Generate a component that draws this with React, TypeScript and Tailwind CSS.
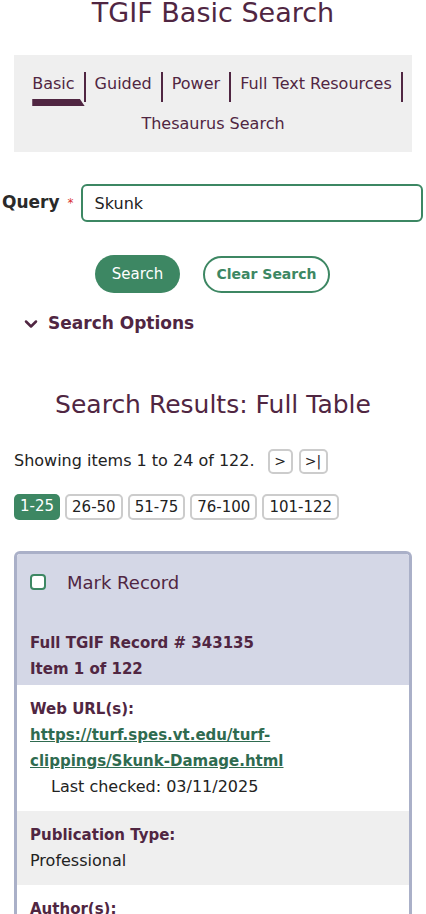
import { ChevronDown } from "lucide-react";

const navItems = ["Basic", "Guided", "Power", "Full Text Resources", "Thesaurus Search"];
const pages = ["1-25", "26-50", "51-75", "76-100", "101-122"];

export default function App() {
  return (
    <div className="min-h-screen bg-white font-['DejaVu_Sans',sans-serif] text-[#222]">
      <h1 className="mt-[-3px] text-center text-[27px] leading-[32px] text-[#502642]">
        TGIF Basic Search
      </h1>

      {/* search type tabs */}
      <nav className="mx-[14px] mt-[26px] flex h-[97px] flex-wrap content-start justify-center bg-[#efefef] px-1 pt-[17px]">
        {navItems.map((item, i) => (
          <div
            key={item}
            className={
              "relative h-[30px] px-[9px] text-[16px] leading-[24px] text-[#502642] " +
              (i < 3 ? "border-r-2 border-[#502642]" : "") +
              (i === 3 ? "border-r-2 border-[#502642] mb-[10px]" : "")
            }
          >
            {item}
            {i === 0 && (
              <span className="absolute bottom-[-4px] left-[9px] right-[-1px] h-[7px] bg-[#502642] [clip-path:polygon(0_0,91%_0,100%_100%,0_100%)]" />
            )}
          </div>
        ))}
      </nav>

      {/* query */}
      <div className="mt-[32px] flex items-center pl-[2px] pr-[3px]">
        <label className="text-[17px] font-bold text-[#2a2a2a]">Query</label>
        <span className="ml-[8px] mr-[7px] text-[12px] text-[#d93030]">*</span>
        <input
          defaultValue="Skunk"
          className="h-[38px] flex-1 rounded-[6px] border-2 border-[#3c8763] px-[12px] text-[16px] text-[#222] outline-none"
        />
      </div>

      <div className="mt-[33px] flex items-center pl-[95px]">
        <button className="h-[38px] w-[85px] rounded-full bg-[#3d8763] text-[15px] text-white">
          Search
        </button>
        <button className="ml-[23px] h-[37px] w-[127px] rounded-full border-2 border-[#3d8763] text-[14px] font-bold text-[#3d8763]">
          Clear Search
        </button>
      </div>

      <div className="mt-[18px] flex items-center gap-[7px] pl-[21px] text-[#502642]">
        <ChevronDown className="h-[20px] w-[20px]" strokeWidth={3} />
        <span className="text-[17px] font-bold">Search Options</span>
      </div>

      <h2 className="mt-[52px] text-center text-[25px] leading-[32px] text-[#502642]">
        Search Results: Full Table
      </h2>

      <div className="mt-[28px] flex items-center pl-[14px]">
        <span className="text-[16px] text-[#222]">Showing items 1 to 24 of 122.</span>
        <button className="ml-[13px] h-[25px] w-[25px] rounded-[5px] border-2 border-[#ccc] text-[14px] leading-none">
          &gt;
        </button>
        <button className="ml-[6px] h-[25px] w-[29px] rounded-[5px] border-2 border-[#ccc] text-[14px] leading-none">
          &gt;|
        </button>
      </div>

      <div className="mt-[20px] flex gap-[5px] pl-[14px]">
        {pages.map((p, i) => (
          <button
            key={p}
            className={
              i === 0
                ? "h-[26px] rounded-[5px] bg-[#3d8763] px-[6px] text-[15px] text-white"
                : "h-[26px] rounded-[5px] border-2 border-[#ccc] px-[5px] text-[15px] text-[#222]"
            }
          >
            {p}
          </button>
        ))}
      </div>

      {/* record card */}
      <div className="mx-[14px] mt-[31px] overflow-hidden rounded-t-[6px] border-x-[3px] border-t-[3px] border-[#aab0c8]">
        <div className="bg-[#d4d7e6] px-[13px] pb-[3px] pt-[15px]">
          <label className="flex items-center">
            <span className="h-[16px] w-[16px] rounded-[4px] border-2 border-[#3d8763] bg-white" />
            <span className="ml-[21px] text-[18px] text-[#502642]">Mark Record</span>
          </label>
          <div className="mt-[34px] text-[15px] font-bold leading-[26px] text-[#502642]">
            <div>Full TGIF Record # 343135</div>
            <div>Item 1 of 122</div>
          </div>
        </div>

        <div className="bg-white px-[13px] py-[11px] text-[16px] leading-[26px]">
          <div className="text-[15px] font-bold text-[#502642]">Web URL(s):</div>
          <a href="#" className="text-[15px] font-bold text-[#2f6b50] underline">
            https://turf.spes.vt.edu/turf-
            <br />
            clippings/Skunk-Damage.html
          </a>
          <div className="pl-[21px] text-[#222]">Last checked: 03/11/2025</div>
        </div>

        <div className="bg-[#efefef] px-[13px] py-[11px] text-[16px] leading-[26px]">
          <div className="text-[15px] font-bold text-[#502642]">Publication Type:</div>
          <div className="text-[#222]">Professional</div>
        </div>

        <div className="bg-white px-[13px] py-[11px] text-[16px] leading-[26px]">
          <div className="text-[15px] font-bold text-[#502642]">Author(s):</div>
          <div className="text-[#222]">Goatley, Mike</div>
        </div>
      </div>
    </div>
  );
}
